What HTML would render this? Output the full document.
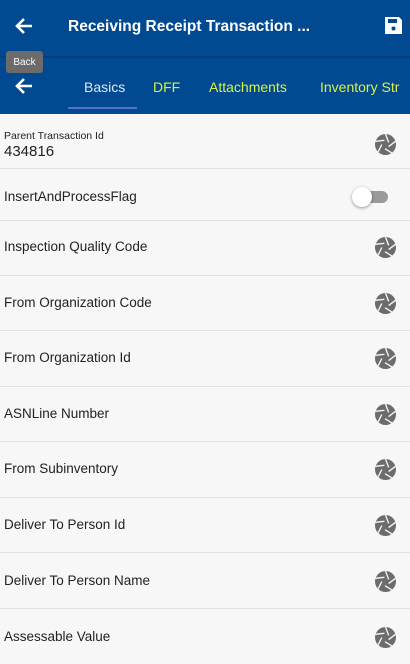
<!DOCTYPE html><html><head><style>
body{margin:0;width:410px;height:659px;overflow:hidden;background:#f7f7f7;font-family:"Liberation Sans",sans-serif;position:relative}
.hdr{position:absolute;left:0;top:0;width:410px;height:114px;background:#014a92}
.line{position:absolute;left:0;top:56px;width:410px;height:2px;background:#013f7c}
.t{position:absolute;white-space:nowrap}
.row{position:absolute;left:0;width:410px;border-bottom:1px solid #e2e2e2}
.lbl{position:absolute;left:4px;font-size:13.5px;color:#222;white-space:nowrap}
.ic{position:absolute;left:375px}
</style></head><body>
<div class="hdr"></div><div class="line"></div>
<svg class="t" style="left:14px;top:17px" width="20" height="18" viewBox="0 0 20 18"><path d="M18 9H3M10 2L3 9l7 7" stroke="#fff" stroke-width="2.6" fill="none"/></svg>
<div class="t" style="left:68px;top:18px;color:#fff;font-weight:bold;font-size:15.5px">Receiving Receipt Transaction ...</div>
<svg class="t" style="left:384px;top:16px" width="19" height="19" viewBox="0 0 19 19"><path d="M1 1h14l3 3v14H1z" fill="#fff"/><rect x="4" y="3" width="9" height="4" fill="#014a92"/><circle cx="9.5" cy="12.5" r="2" fill="#014a92"/></svg>
<div class="t" style="left:6px;top:51px;width:37px;height:22px;background:#6b6b6b;border-radius:3px;color:#fff;font-size:10px;line-height:24px;text-align:center">Back</div>
<svg class="t" style="left:14px;top:77px" width="20" height="18" viewBox="0 0 20 18"><path d="M18 9H3M10 2L3 9l7 7" stroke="#fff" stroke-width="2.6" fill="none"/></svg>
<div class="t" style="left:84px;top:79px;color:#dfe8f5;font-size:14px">Basics</div>
<div class="t" style="left:68px;top:107px;width:69px;height:2px;background:#5a6fd0"></div>
<div class="t" style="left:153px;top:79px;color:#d6f04a;font-size:14px">DFF</div>
<div class="t" style="left:209px;top:79px;color:#d6f04a;font-size:14px">Attachments</div>
<div class="t" style="left:320px;top:79px;color:#d6f04a;font-size:14px">Inventory Str</div>

<div class="row" style="top:114px;height:54px"><div class="lbl" style="top:16px;font-size:10.5px">Parent Transaction Id</div><div class="lbl" style="top:29px;font-size:15px">434816</div>
<svg class="ic" style="top:20px" width="21" height="21" viewBox="0 0 20 20"><circle cx="10" cy="10" r="10" fill="#6c6c6c"/><g stroke="#f7f7f7" stroke-width="1.3"><path d="M10 0L13 8"/><path d="M19.5 7L13 12"/><path d="M16 18L9.5 14"/><path d="M3 17L6.5 10"/><path d="M0.5 7L9 6"/></g></svg></div>
<div class="row" style="top:169px;height:51px"><div class="lbl" style="top:20px">InsertAndProcessFlag</div>
<div class="t" style="left:360px;top:22px;width:28px;height:12px;border-radius:6px;background:#9a9a9a"></div>
<div class="t" style="left:352px;top:18px;width:20px;height:20px;border-radius:50%;background:#fff;box-shadow:0 1px 3px rgba(0,0,0,.4)"></div></div>

<div class="row" style="top:221px;height:54px"><div class="lbl" style="top:18px">Inspection Quality Code</div><svg class="ic" style="top:16px" width="21" height="21" viewBox="0 0 20 20"><circle cx="10" cy="10" r="10" fill="#6c6c6c"/><g stroke="#f7f7f7" stroke-width="1.3"><path d="M10 0L13 8"/><path d="M19.5 7L13 12"/><path d="M16 18L9.5 14"/><path d="M3 17L6.5 10"/><path d="M0.5 7L9 6"/></g></svg></div>
<div class="row" style="top:276px;height:54px"><div class="lbl" style="top:19px">From Organization Code</div><svg class="ic" style="top:17px" width="21" height="21" viewBox="0 0 20 20"><circle cx="10" cy="10" r="10" fill="#6c6c6c"/><g stroke="#f7f7f7" stroke-width="1.3"><path d="M10 0L13 8"/><path d="M19.5 7L13 12"/><path d="M16 18L9.5 14"/><path d="M3 17L6.5 10"/><path d="M0.5 7L9 6"/></g></svg></div>
<div class="row" style="top:332px;height:54px"><div class="lbl" style="top:18px">From Organization Id</div><svg class="ic" style="top:16px" width="21" height="21" viewBox="0 0 20 20"><circle cx="10" cy="10" r="10" fill="#6c6c6c"/><g stroke="#f7f7f7" stroke-width="1.3"><path d="M10 0L13 8"/><path d="M19.5 7L13 12"/><path d="M16 18L9.5 14"/><path d="M3 17L6.5 10"/><path d="M0.5 7L9 6"/></g></svg></div>
<div class="row" style="top:387px;height:54px"><div class="lbl" style="top:19px">ASNLine Number</div><svg class="ic" style="top:17px" width="21" height="21" viewBox="0 0 20 20"><circle cx="10" cy="10" r="10" fill="#6c6c6c"/><g stroke="#f7f7f7" stroke-width="1.3"><path d="M10 0L13 8"/><path d="M19.5 7L13 12"/><path d="M16 18L9.5 14"/><path d="M3 17L6.5 10"/><path d="M0.5 7L9 6"/></g></svg></div>
<div class="row" style="top:443px;height:54px"><div class="lbl" style="top:18px">From Subinventory</div><svg class="ic" style="top:16px" width="21" height="21" viewBox="0 0 20 20"><circle cx="10" cy="10" r="10" fill="#6c6c6c"/><g stroke="#f7f7f7" stroke-width="1.3"><path d="M10 0L13 8"/><path d="M19.5 7L13 12"/><path d="M16 18L9.5 14"/><path d="M3 17L6.5 10"/><path d="M0.5 7L9 6"/></g></svg></div>
<div class="row" style="top:498px;height:54px"><div class="lbl" style="top:19px">Deliver To Person Id</div><svg class="ic" style="top:17px" width="21" height="21" viewBox="0 0 20 20"><circle cx="10" cy="10" r="10" fill="#6c6c6c"/><g stroke="#f7f7f7" stroke-width="1.3"><path d="M10 0L13 8"/><path d="M19.5 7L13 12"/><path d="M16 18L9.5 14"/><path d="M3 17L6.5 10"/><path d="M0.5 7L9 6"/></g></svg></div>
<div class="row" style="top:554px;height:54px"><div class="lbl" style="top:19px">Deliver To Person Name</div><svg class="ic" style="top:17px" width="21" height="21" viewBox="0 0 20 20"><circle cx="10" cy="10" r="10" fill="#6c6c6c"/><g stroke="#f7f7f7" stroke-width="1.3"><path d="M10 0L13 8"/><path d="M19.5 7L13 12"/><path d="M16 18L9.5 14"/><path d="M3 17L6.5 10"/><path d="M0.5 7L9 6"/></g></svg></div>
<div class="row" style="top:610px;height:54px;border:none"><div class="lbl" style="top:19px">Assessable Value</div><svg class="ic" style="top:17px" width="21" height="21" viewBox="0 0 20 20"><circle cx="10" cy="10" r="10" fill="#6c6c6c"/><g stroke="#f7f7f7" stroke-width="1.3"><path d="M10 0L13 8"/><path d="M19.5 7L13 12"/><path d="M16 18L9.5 14"/><path d="M3 17L6.5 10"/><path d="M0.5 7L9 6"/></g></svg></div>
</body></html>
